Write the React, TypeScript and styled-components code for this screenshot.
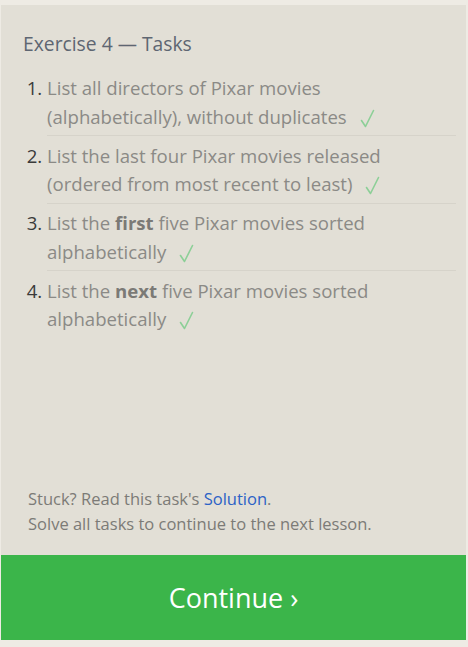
import React from "react";
import styled, { createGlobalStyle } from "styled-components";

const Global = createGlobalStyle`
  html, body { margin: 0; padding: 0; background: #eeebe4; }
  body { font-family: "Open Sans", "Noto Sans", sans-serif; }
`;

const Page = styled.div`
  width: 468px;
  height: 647px;
  padding: 5px 2px 7px 1px;
  box-sizing: border-box;
`;

const Panel = styled.div`
  height: 100%;
  background: #e2dfd6;
  display: flex;
  flex-direction: column;
`;

const Body = styled.div`
  flex: 1;
  display: flex;
  flex-direction: column;
  padding: 26px 10px 0 22px;
`;

const Title = styled.h2`
  margin: 0 0 17px 0;
  font-weight: 400;
  font-size: 19.3px;
  line-height: 26px;
  color: #5e6672;
`;

const List = styled.ol`
  margin: 0;
  padding: 0 0 0 24px;
  list-style: decimal;
`;

const Item = styled.li<{ $last?: boolean }>`
  font-size: 18.6px;
  line-height: 28.5px;
  color: #8b8a86;
  padding: 0 0 4px 0;
  margin-bottom: 5.5px;
  border-bottom: 1px solid ${(p) => (p.$last ? "transparent" : "#d6d3ca")};
  &::marker { color: #3a3a3a; }
  b { font-weight: 700; color: #7b7a76; }
`;

const CheckIcon = styled.svg`
  display: inline-block;
  width: 15px;
  height: 19px;
  margin-left: 13px;
  vertical-align: -4px;
`;

const Check = () => (
  <CheckIcon viewBox="0 0 15 19" aria-hidden="true">
    <polyline
      points="1.5,11.5 5.5,17.5 13.5,1.5"
      fill="none"
      stroke="#8ccf97"
      strokeWidth="1.6"
      strokeLinecap="round"
      strokeLinejoin="round"
    />
  </CheckIcon>
);

const Spacer = styled.div`
  flex: 1;
`;

const Note = styled.p`
  margin: 0 0 19px 5px;
  font-size: 16.5px;
  line-height: 25px;
  color: #7c7b77;
  a { color: #2c62c6; text-decoration: none; }
`;

const ContinueButton = styled.button`
  height: 85px;
  border: 0;
  background: #3bb54a;
  color: #ffffff;
  font-family: "Open Sans", "Noto Sans", sans-serif;
  font-size: 27px;
  cursor: pointer;
`;

const items: React.ReactNode[] = [
  <>List all directors of Pixar movies (alphabetically), without duplicates</>,
  <>List the last four Pixar movies released (ordered from most recent to least)</>,
  <>List the <b>first</b> five Pixar movies sorted alphabetically</>,
  <>List the <b>next</b> five Pixar movies sorted alphabetically</>,
];

export default function App() {
  return (
    <Page>
      <Global />
      <Panel>
        <Body>
          <Title>Exercise 4 — Tasks</Title>
          <List>
            {items.map((t, i) => (
              <Item key={i} $last={i === items.length - 1}>
                {t}
                <Check />
              </Item>
            ))}
          </List>
          <Spacer />
          <Note>
            Stuck? Read this task's <a href="#">Solution</a>.
            <br />
            Solve all tasks to continue to the next lesson.
          </Note>
        </Body>
        <ContinueButton>Continue ›</ContinueButton>
      </Panel>
    </Page>
  );
}
